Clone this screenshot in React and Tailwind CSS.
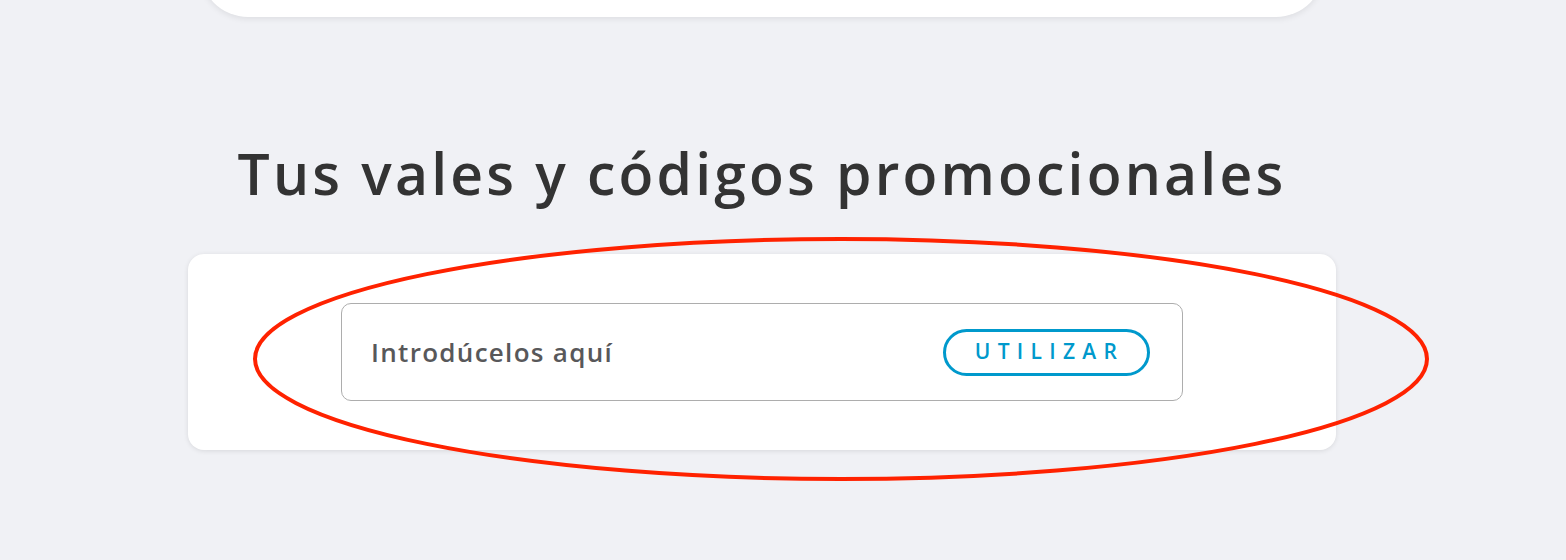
import React from 'react'

export default function App() {
  return (
    <div className="relative w-full h-[560px] overflow-hidden bg-[#f0f1f5]" style={{ fontFamily: '"Open Sans", Lato, sans-serif' }}>

      <div className="w-[1148px] ml-[188px] flex flex-col">

        {/* previous card, cut by the top of the page */}
        <div className="mx-[12px] -mt-[60px] h-[77px] bg-white rounded-b-[48px] shadow-[0_2px_6px_rgba(0,0,0,0.08)]" />

        <h2 className="mt-[128px] text-center text-[57px] leading-none font-semibold text-[#333333] tracking-[3.2px]">
          Tus vales y códigos promocionales
        </h2>

        <div className="mt-[52px] bg-white rounded-[16px] shadow-[0_1px_5px_rgba(0,0,0,0.1)] px-[153px] py-[49px]">
          <div className="h-[98px] border-[1.5px] border-[#adadad] rounded-[10px] flex items-center justify-between pl-[29px] pr-[32px]">
            <span className="text-[26px] font-semibold text-[#58585a] tracking-[1.3px]">Introdúcelos aquí</span>
            <button className="w-[207px] h-[47px] rounded-full border-[3px] border-[#0099cc] text-[#0099cc] text-[21px] font-semibold tracking-[7.3px] pl-[6px] flex items-center justify-center">
              UTILIZAR
            </button>
          </div>
        </div>

      </div>

      {/* annotation ring */}
      <svg className="absolute left-0 top-0 pointer-events-none" width="1566" height="560">
        <ellipse cx="841" cy="359" rx="586" ry="120" fill="none" stroke="#ff2200" strokeWidth="4" />
      </svg>
    </div>
  )
}
